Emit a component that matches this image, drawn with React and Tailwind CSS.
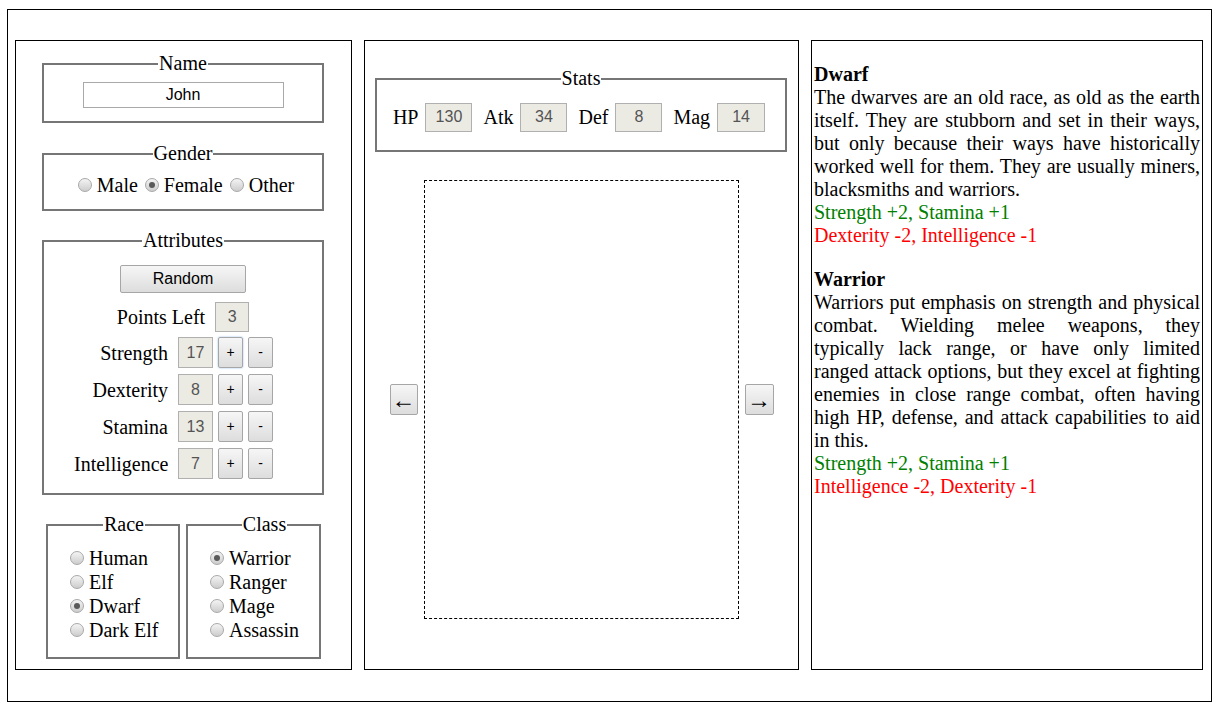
import React from "react";

const sans = "font-['Liberation_Sans',Arial,sans-serif]";

function Radio({ checked }) {
  return (
    <span className="inline-flex w-[14px] h-[14px] shrink-0 items-center justify-center rounded-full border border-[#a8a8a8] bg-linear-to-b from-[#f4f4f4] to-[#cdcdcd]">
      {checked && <span className="w-[6px] h-[6px] rounded-full bg-[#5a5a5a]" />}
    </span>
  );
}

function Choice({ label, checked }) {
  return (
    <div className="flex items-center gap-[5px] h-[24px]">
      <Radio checked={checked} />
      <span>{label}</span>
    </div>
  );
}

function Box({ value, w = "w-[35px]", h = "h-[31px]" }) {
  return (
    <div
      className={`${w} ${h} ${sans} flex items-center justify-center border border-[#b0b0b0] bg-[#ebebe4] text-[16px] text-[#545454]`}
    >
      {value}
    </div>
  );
}

function Btn({ children, className = "" }) {
  return (
    <button
      className={`${sans} flex items-center justify-center rounded-[2px] border border-[#a6a6a6] bg-linear-to-b from-[#f6f6f6] to-[#dddddd] text-black ${className}`}
    >
      {children}
    </button>
  );
}

function Group({ title, className = "", children }) {
  return (
    <fieldset className={`border-2 border-[#767676] ${className}`}>
      <legend className="mx-auto px-[1px] leading-[23px]">{title}</legend>
      {children}
    </fieldset>
  );
}

const attrs = [
  { name: "Strength", value: 17, focus: true },
  { name: "Dexterity", value: 8 },
  { name: "Stamina", value: 13 },
  { name: "Intelligence", value: 7 },
];

const stats = [
  { name: "HP", value: 130 },
  { name: "Atk", value: 34 },
  { name: "Def", value: 8 },
  { name: "Mag", value: 14 },
];

function LeftPanel() {
  return (
    <div className="w-[337px] h-[630px] shrink-0 border border-black pl-[26px] pt-[11px]">
      <Group title="Name" className="w-[282px] pb-[13px]">
        <div className="flex justify-center pt-[7px]">
          <div className={`w-[201px] h-[26px] ${sans} flex items-center justify-center border border-[#a9a9a9] text-[16px]`}>
            John
          </div>
        </div>
      </Group>

      <Group title="Gender" className="w-[282px] mt-[19px] pb-[13px]">
        <div className="flex justify-center items-center gap-[7px] pt-[8px] pl-[6px] h-[31px]">
          <Choice label="Male" />
          <Choice label="Female" checked />
          <Choice label="Other" />
        </div>
      </Group>

      <Group title="Attributes" className="w-[282px] mt-[18px] pb-[14px]">
        <div className="flex justify-center pt-[13px]">
          <Btn className="w-[126px] h-[28px] text-[16px]">Random</Btn>
        </div>
        <div className="flex justify-center items-center gap-[10px] mt-[9px]">
          <span>Points Left</span>
          <Box value={3} w="w-[34px]" h="h-[30px]" />
        </div>
        <div className="flex flex-col gap-[6px] mt-[5px] ml-[30px]">
          {attrs.map((a) => (
            <div key={a.name} className="flex items-center">
              <span className="w-[94px] text-right">{a.name}</span>
              <div className="ml-[10px]">
                <Box value={a.value} />
              </div>
              <Btn
                className={`ml-[5px] w-[25px] h-[31px] text-[14px] ${
                  a.focus ? "border-[#5d9ee8] shadow-[0_0_2px_#8ab8ee]" : ""
                }`}
              >
                +
              </Btn>
              <Btn className="ml-[5px] w-[25px] h-[31px] text-[14px]">-</Btn>
            </div>
          ))}
        </div>
      </Group>

      <div className="flex gap-[6px] ml-[4px] mt-[18px]">
        <Group title="Race" className="w-[134px] pl-[22px] pb-[15px]">
          <div className="pt-[10px]">
            <Choice label="Human" />
            <Choice label="Elf" />
            <Choice label="Dwarf" checked />
            <Choice label="Dark Elf" />
          </div>
        </Group>
        <Group title="Class" className="w-[135px] pl-[22px] pb-[15px]">
          <div className="pt-[10px]">
            <Choice label="Warrior" checked />
            <Choice label="Ranger" />
            <Choice label="Mage" />
            <Choice label="Assassin" />
          </div>
        </Group>
      </div>
    </div>
  );
}

function MiddlePanel() {
  return (
    <div className="w-[435px] h-[630px] shrink-0 border border-black pt-[26px]">
      <Group title="Stats" className="w-[412px] ml-[10px] pb-[18px]">
        <div className="flex justify-center items-center pt-[12px] pr-[4px]">
          {stats.map((s, i) => (
            <div key={s.name} className={`flex items-center gap-[7px] ${i ? "ml-[11px]" : ""}`}>
              <span>{s.name}</span>
              <Box value={s.value} w={i === 3 ? "w-[48px]" : "w-[47px]"} h="h-[29px]" />
            </div>
          ))}
        </div>
      </Group>
      <div className="flex justify-center items-center gap-[6px] mt-[28px]">
        <Btn className="w-[28px] h-[31px] text-[24px] leading-none">←</Btn>
        <div className="w-[315px] h-[439px] border border-dashed border-black" />
        <Btn className="w-[29px] h-[31px] text-[24px] leading-none">→</Btn>
      </div>
    </div>
  );
}

function RightPanel() {
  return (
    <div className="w-[392px] h-[630px] shrink-0 border border-black px-[2px] pt-[22px] text-justify leading-[23px]">
      <div>
        <div className="font-bold">Dwarf</div>
        <div>
          The dwarves are an old race, as old as the earth itself. They are stubborn and set in
          their ways, but only because their ways have historically worked well for them. They
          are usually miners, blacksmiths and warriors.
        </div>
        <div className="text-[#008000]">Strength +2, Stamina +1</div>
        <div className="text-[#ff0000]">Dexterity -2, Intelligence -1</div>
      </div>
      <div className="mt-[21px]">
        <div className="font-bold">Warrior</div>
        <div>
          Warriors put emphasis on strength and physical combat. Wielding melee weapons, they
          typically lack range, or have only limited ranged attack options, but they excel at
          fighting enemies in close range combat, often having high HP, defense, and attack
          capabilities to aid in this.
        </div>
        <div className="text-[#008000]">Strength +2, Stamina +1</div>
        <div className="text-[#ff0000]">Intelligence -2, Dexterity -1</div>
      </div>
    </div>
  );
}

export default function App() {
  return (
    <div className="min-h-[711px] bg-white pt-[9px] pl-[7px] font-['Liberation_Serif','Times_New_Roman',serif] text-[20px] text-black">
      <div className="w-[1205px] h-[693px] border border-black flex gap-[12px] pt-[30px] pl-[7px]">
        <LeftPanel />
        <MiddlePanel />
        <RightPanel />
      </div>
    </div>
  );
}
